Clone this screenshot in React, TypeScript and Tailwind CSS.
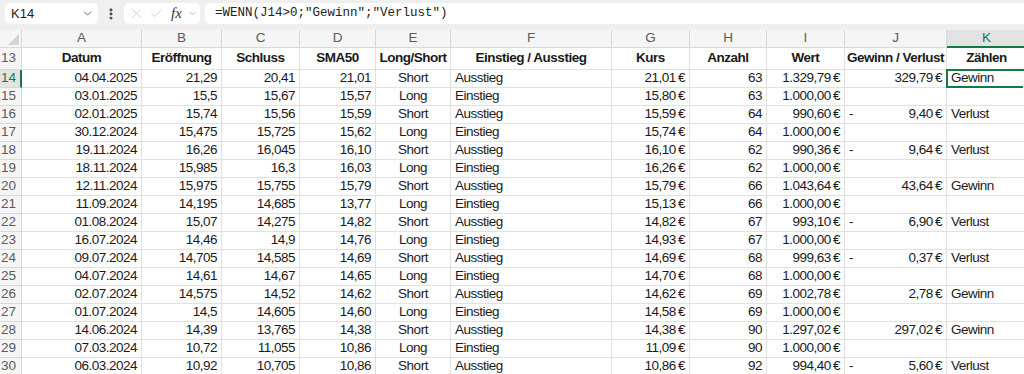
import React from 'react';
import { ChevronDown, EllipsisVertical, X, Check } from 'lucide-react';

type Row = {
  n: number;
  datum: string;
  open: string;
  close: string;
  sma: string;
  side: string;
  step: string;
  kurs: string;
  anzahl: string;
  wert: string;
  gv?: string;
  neg?: boolean;
  zaehlen?: string;
};

const rows: Row[] = [
  { n: 14, datum: '04.04.2025', open: '21,29', close: '20,41', sma: '21,01', side: 'Short', step: 'Ausstieg', kurs: '21,01 €', anzahl: '63', wert: '1.329,79 €', gv: '329,79 €', zaehlen: 'Gewinn' },
  { n: 15, datum: '03.01.2025', open: '15,5', close: '15,67', sma: '15,57', side: 'Long', step: 'Einstieg', kurs: '15,80 €', anzahl: '63', wert: '1.000,00 €' },
  { n: 16, datum: '02.01.2025', open: '15,74', close: '15,56', sma: '15,59', side: 'Short', step: 'Ausstieg', kurs: '15,59 €', anzahl: '64', wert: '990,60 €', gv: '9,40 €', neg: true, zaehlen: 'Verlust' },
  { n: 17, datum: '30.12.2024', open: '15,475', close: '15,725', sma: '15,62', side: 'Long', step: 'Einstieg', kurs: '15,74 €', anzahl: '64', wert: '1.000,00 €' },
  { n: 18, datum: '19.11.2024', open: '16,26', close: '16,045', sma: '16,10', side: 'Short', step: 'Ausstieg', kurs: '16,10 €', anzahl: '62', wert: '990,36 €', gv: '9,64 €', neg: true, zaehlen: 'Verlust' },
  { n: 19, datum: '18.11.2024', open: '15,985', close: '16,3', sma: '16,03', side: 'Long', step: 'Einstieg', kurs: '16,26 €', anzahl: '62', wert: '1.000,00 €' },
  { n: 20, datum: '12.11.2024', open: '15,975', close: '15,755', sma: '15,79', side: 'Short', step: 'Ausstieg', kurs: '15,79 €', anzahl: '66', wert: '1.043,64 €', gv: '43,64 €', zaehlen: 'Gewinn' },
  { n: 21, datum: '11.09.2024', open: '14,195', close: '14,685', sma: '13,77', side: 'Long', step: 'Einstieg', kurs: '15,13 €', anzahl: '66', wert: '1.000,00 €' },
  { n: 22, datum: '01.08.2024', open: '15,07', close: '14,275', sma: '14,82', side: 'Short', step: 'Ausstieg', kurs: '14,82 €', anzahl: '67', wert: '993,10 €', gv: '6,90 €', neg: true, zaehlen: 'Verlust' },
  { n: 23, datum: '16.07.2024', open: '14,46', close: '14,9', sma: '14,76', side: 'Long', step: 'Einstieg', kurs: '14,93 €', anzahl: '67', wert: '1.000,00 €' },
  { n: 24, datum: '09.07.2024', open: '14,705', close: '14,585', sma: '14,69', side: 'Short', step: 'Ausstieg', kurs: '14,69 €', anzahl: '68', wert: '999,63 €', gv: '0,37 €', neg: true, zaehlen: 'Verlust' },
  { n: 25, datum: '04.07.2024', open: '14,61', close: '14,67', sma: '14,65', side: 'Long', step: 'Einstieg', kurs: '14,70 €', anzahl: '68', wert: '1.000,00 €' },
  { n: 26, datum: '02.07.2024', open: '14,575', close: '14,52', sma: '14,62', side: 'Short', step: 'Ausstieg', kurs: '14,62 €', anzahl: '69', wert: '1.002,78 €', gv: '2,78 €', zaehlen: 'Gewinn' },
  { n: 27, datum: '01.07.2024', open: '14,5', close: '14,605', sma: '14,60', side: 'Long', step: 'Einstieg', kurs: '14,58 €', anzahl: '69', wert: '1.000,00 €' },
  { n: 28, datum: '14.06.2024', open: '14,39', close: '13,765', sma: '14,38', side: 'Short', step: 'Ausstieg', kurs: '14,38 €', anzahl: '90', wert: '1.297,02 €', gv: '297,02 €', zaehlen: 'Gewinn' },
  { n: 29, datum: '07.03.2024', open: '10,72', close: '11,055', sma: '10,86', side: 'Long', step: 'Einstieg', kurs: '11,09 €', anzahl: '90', wert: '1.000,00 €' },
  { n: 30, datum: '06.03.2024', open: '10,92', close: '10,705', sma: '10,86', side: 'Short', step: 'Ausstieg', kurs: '10,86 €', anzahl: '92', wert: '994,40 €', gv: '5,60 €', neg: true, zaehlen: 'Verlust' },
];

const letters = ['A', 'B', 'C', 'D', 'E', 'F', 'G', 'H', 'I', 'J', 'K'];
const headers = ['Datum', 'Eröffnung', 'Schluss', 'SMA50', 'Long/Short', 'Einstieg / Ausstieg', 'Kurs', 'Anzahl', 'Wert', 'Gewinn / Verlust', 'Zählen'];

const sans = { fontFamily: "'Liberation Sans', Arial, sans-serif" };

// euro amounts use a thin space like the sheet's number format
const eur = (s: string) => s.replace(' €', '\u2009€');

const cell = 'border-r border-b border-[#e1e1e1] flex items-center px-[4px] whitespace-nowrap overflow-hidden';
const rowHead = 'bg-[#f5f5f5] border-r border-b border-[#d8d8d8] flex items-center pl-[1px] text-[13.5px] text-[#5a5a5a]';

function FormulaBar() {
  return (
    <div className="h-[30px] bg-[#efefef] flex items-start pt-[3px] pl-[5px] gap-[5px]" style={sans}>
      <div className="w-[93px] h-[21px] bg-white rounded-[5px] flex items-center pl-[6px] pr-[4px] text-[13px] text-[#222]">
        <span className="flex-1">K14</span>
        <ChevronDown size={13} strokeWidth={1.5} className="text-[#444]" />
      </div>
      <div className="w-[16px] h-[21px] flex items-center justify-center">
        <EllipsisVertical size={14} strokeWidth={3} className="text-[#444]" />
      </div>
      <div className="w-[76px] h-[21px] bg-white rounded-[5px] flex items-center pl-[5px] gap-[5px]">
        <X size={15} strokeWidth={1} className="text-[#b5b5b5]" />
        <Check size={15} strokeWidth={1} className="text-[#b5b5b5]" />
        <span className="text-[15px] italic text-[#333] leading-none ml-[2px]" style={{ fontFamily: "'Liberation Serif', serif" }}>fx</span>
        <ChevronDown size={11} strokeWidth={1.2} className="text-[#777]" />
      </div>
      <div className="flex-1 h-[21px] bg-white rounded-l-[5px] flex items-center pl-[10px] text-[12.5px] text-[#222]" style={{ fontFamily: "'Liberation Mono', monospace" }}>
        =WENN(J14&gt;0;"Gewinn";"Verlust")
      </div>
    </div>
  );
}

export default function App() {
  return (
    <div className="w-[1024px] h-[374px] overflow-hidden bg-white">
      <FormulaBar />
      <div
        className="grid grid-cols-[22px_120px_80px_78px_76px_75px_161px_78px_77px_78px_102px_80px] text-[13.5px] tracking-[-0.5px] text-[#1a1a1a]"
        style={sans}
      >
        {/* column letters */}
        <div className="h-[18px] bg-[#f5f5f5] border-r border-b border-[#d8d8d8] flex items-end justify-end pr-[2px] pb-[2px]">
          <svg width="11" height="11" viewBox="0 0 11 11">
            <polygon points="11,0 11,11 0,11" fill="#d4d4d4" />
          </svg>
        </div>
        {letters.map((l) =>
          l === 'K' ? (
            <div key={l} className="h-[18px] bg-[#e3e3e3] border-r border-b-2 border-r-[#d8d8d8] border-b-[#107c41] flex items-center justify-center text-[13.5px] tracking-normal text-[#107c41]">
              {l}
            </div>
          ) : (
            <div key={l} className="h-[18px] bg-[#f5f5f5] border-r border-b border-[#d8d8d8] flex items-center justify-center text-[13.5px] tracking-normal text-[#5a5a5a]">
              {l}
            </div>
          )
        )}

        {/* row 13: headers */}
        <div className={`${rowHead} h-[22px] tracking-normal`}>13</div>
        {headers.map((h) => (
          <div key={h} className={`${cell} h-[22px] justify-center font-bold`}>
            {h}
          </div>
        ))}

        {rows.map((r) => (
          <React.Fragment key={r.n}>
            {r.n === 14 ? (
              <div className="h-[18px] bg-[#e3e3e3] border-r-2 border-b border-r-[#107c41] border-b-[#d8d8d8] flex items-center pl-[1px] text-[13.5px] tracking-normal text-[#107c41]">
                {r.n}
              </div>
            ) : (
              <div className={`${rowHead} h-[18px] tracking-normal`}>{r.n}</div>
            )}
            <div className={`${cell} h-[18px] justify-end`}>{r.datum}</div>
            <div className={`${cell} h-[18px] justify-end`}>{r.open}</div>
            <div className={`${cell} h-[18px] justify-end`}>{r.close}</div>
            <div className={`${cell} h-[18px] justify-end`}>{r.sma}</div>
            <div className={`${cell} h-[18px] justify-center`}>{r.side}</div>
            <div className={`${cell} h-[18px] justify-start`}>{r.step}</div>
            <div className={`${cell} h-[18px] justify-end`}>{eur(r.kurs)}</div>
            <div className={`${cell} h-[18px] justify-end`}>{r.anzahl}</div>
            <div className={`${cell} h-[18px] justify-end`}>{eur(r.wert)}</div>
            <div className={`${cell} h-[18px] justify-between`}>
              <span>{r.neg ? '-' : ''}</span>
              <span>{r.gv ? eur(r.gv) : ''}</span>
            </div>
            {r.n === 14 ? (
              <div className="relative h-[19px] -mt-[1px] -ml-[1px] border-2 border-[#107c41] flex items-center px-[3px]">
                {r.zaehlen}
                <span className="absolute -right-[4px] -bottom-[4px] w-[6px] h-[6px] bg-[#107c41] border border-white" />
              </div>
            ) : (
              <div className={`${cell} h-[18px] justify-start`}>{r.zaehlen ?? ''}</div>
            )}
          </React.Fragment>
        ))}
      </div>
    </div>
  );
}
